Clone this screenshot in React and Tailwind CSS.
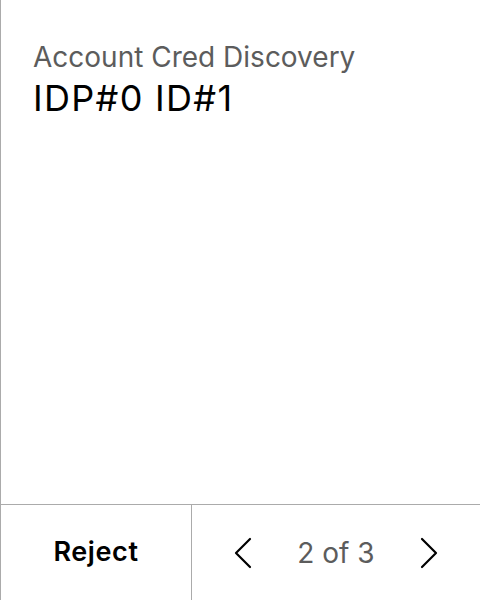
export default function App() {
    return (
        <div
            className="w-[480px] h-[600px] flex flex-col bg-white border-l border-[#ababab] overflow-hidden"
            style={{ fontFamily: "Inter, 'Noto Sans', sans-serif" }}
        >
            <div className="flex-1 pl-[32px] pt-[38px]">
                <div className="text-[28px] leading-[38px] text-[#5c5c5c]">Account Cred Discovery</div>
                <div className="text-[36px] leading-[44px] tracking-[1.3px] text-black">IDP#0 ID#1</div>
            </div>
            <div className="h-[96px] flex border-t border-[#ababab]">
                <button className="w-[191px] flex items-center justify-center text-[27px] font-semibold tracking-[0.6px] text-black border-r border-[#ababab]">
                    Reject
                </button>
                <div className="flex-1 flex items-center justify-between px-[41px]">
                    <svg width="20" height="32" viewBox="0 0 20 32" fill="none" stroke="black" strokeWidth="2.2" strokeLinecap="round" strokeLinejoin="round">
                        <path d="M17 2 L3 16 L17 30" />
                    </svg>
                    <span className="text-[28px] text-[#5c5c5c]">2 of 3</span>
                    <svg width="20" height="32" viewBox="0 0 20 32" fill="none" stroke="black" strokeWidth="2.2" strokeLinecap="round" strokeLinejoin="round">
                        <path d="M3 2 L17 16 L3 30" />
                    </svg>
                </div>
            </div>
        </div>
    );
}
